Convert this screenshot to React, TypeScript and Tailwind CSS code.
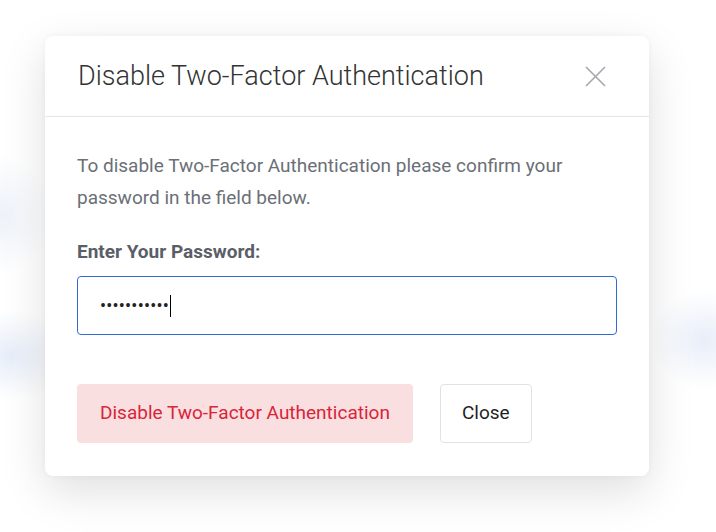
import React from "react";

export default function App() {
  return (
    <div className="w-[716px] h-[532px] overflow-hidden bg-white bg-[radial-gradient(ellipse_50px_60px_at_0px_215px,rgba(225,233,246,0.6),transparent),radial-gradient(ellipse_60px_45px_at_10px_355px,rgba(220,230,246,0.7),transparent),radial-gradient(ellipse_55px_50px_at_705px_340px,rgba(222,231,246,0.7),transparent)] pt-[36px] pl-[45px]" style={{ fontFamily: "Roboto, 'Liberation Sans', sans-serif" }}>
      <div className="w-[604px] h-[440px] bg-white rounded-[8px] shadow-[0_15px_45px_rgba(0,0,0,0.13),0_0_6px_rgba(0,0,0,0.04)] flex flex-col">
        <div className="h-[81px] border-b border-[#e6e6e6] flex items-center justify-between pl-[33px] pr-[43px]">
          <h2 className="text-[27px] font-light text-[#333333]">Disable Two-Factor Authentication</h2>
          <svg width="21" height="21" viewBox="0 0 21 21" className="text-[#a7a9b0]">
            <path d="M1 1L20 20M20 1L1 20" stroke="currentColor" strokeWidth="1.7" />
          </svg>
        </div>
        <div className="px-[32px] pt-[33px] pb-[33px] flex flex-col">
          <p className="text-[19px] leading-[32px] text-[#6b6f77]">
            To disable Two-Factor Authentication please confirm your password in the field below.
          </p>
          <label className="mt-[22px] text-[19px] font-bold text-[#5a5e67] leading-[32px]">Enter Your Password:</label>
          <div className="mt-[8px] h-[59px] border border-[#2f6bd1] rounded-[4px] flex items-center pl-[22px]">
            <span className="text-[18px] text-[#222] tracking-[0.2px]">•••••••••••</span>
            <span className="w-[1px] h-[22px] bg-black ml-[1px]"></span>
          </div>
          <div className="mt-[49px] flex gap-[27px]">
            <button className="h-[59px] px-[23px] bg-[#f9dfe0] rounded-[4px] text-[19px] text-[#d9243a]">Disable Two-Factor Authentication</button>
            <button className="h-[59px] px-[21px] bg-white border border-[#e2e2e2] rounded-[4px] text-[19px] text-[#1f1f1f]">Close</button>
          </div>
        </div>
      </div>
    </div>
  );
}
